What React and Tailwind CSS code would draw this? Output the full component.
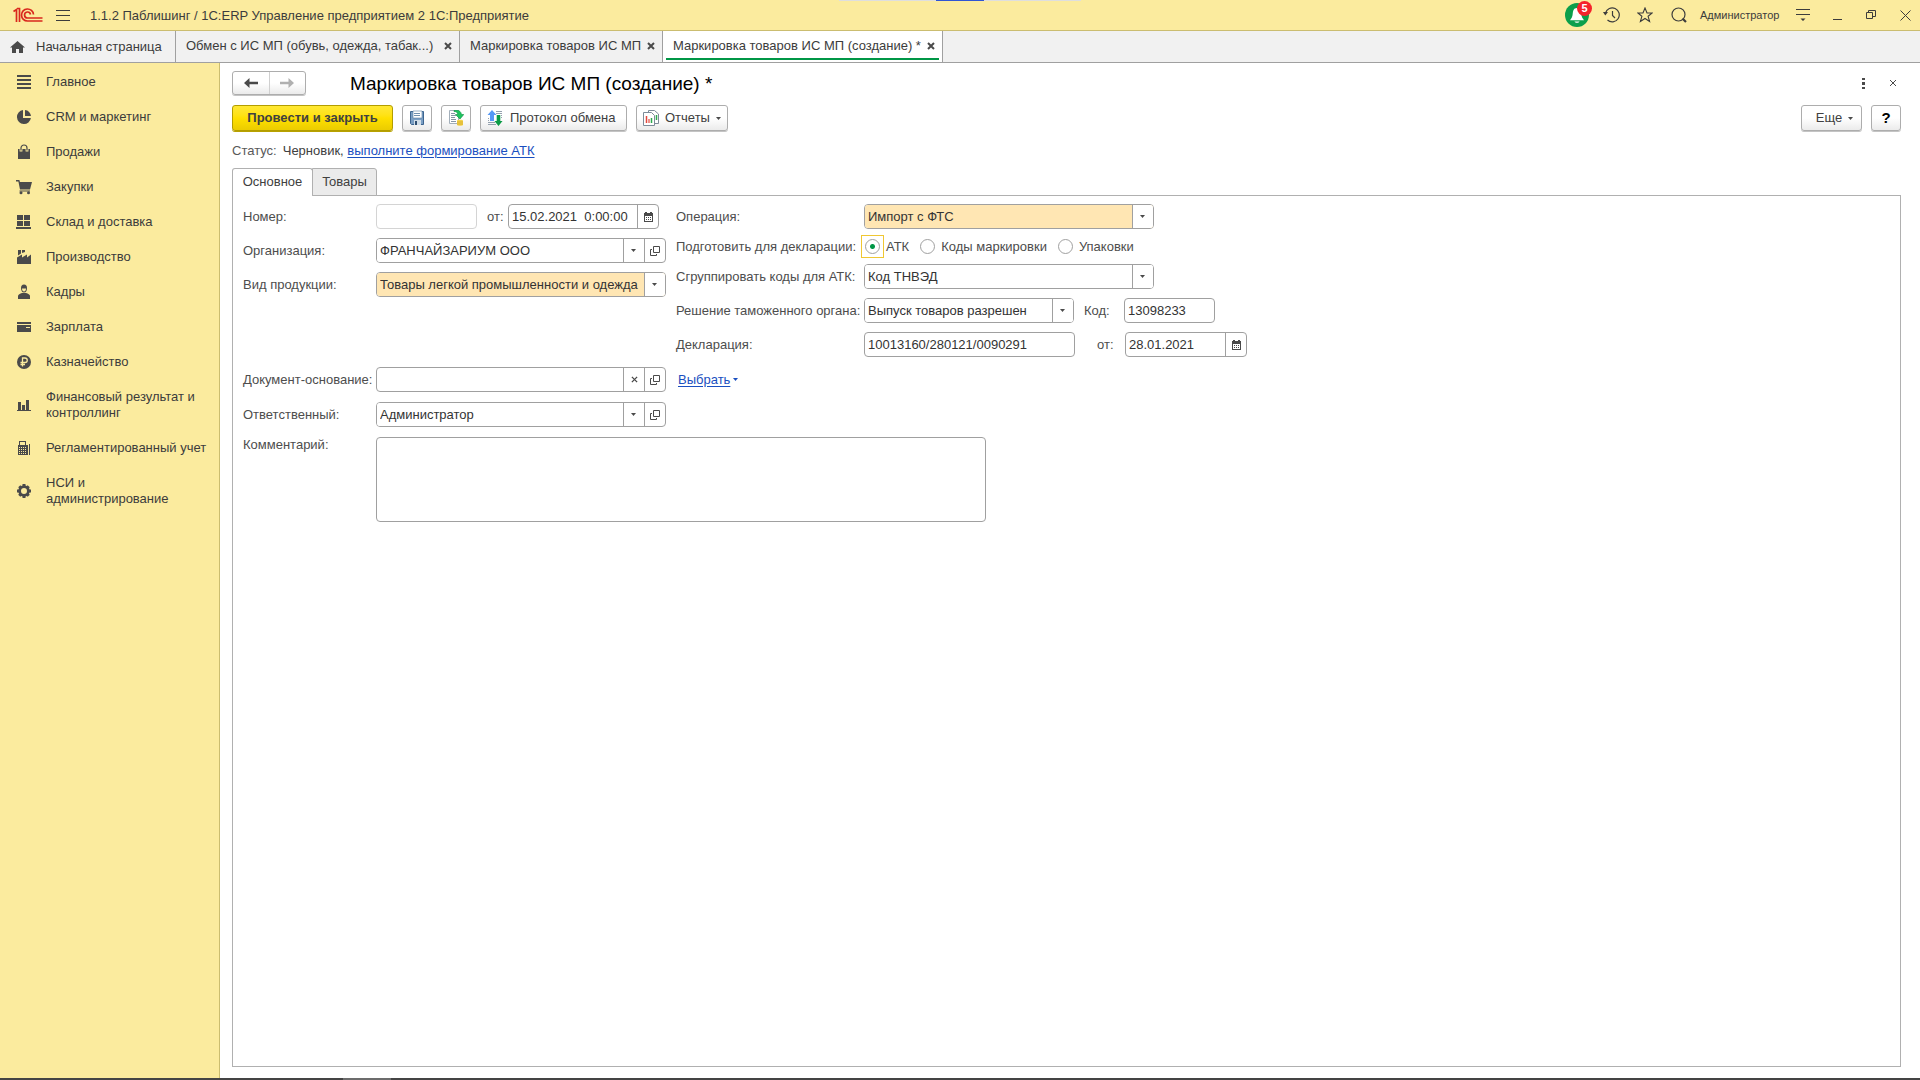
import React, { useState } from 'react';

const INK = '#4a4a4a';

const menuItems = [
  { label: 'Главное', icon: 'list' },
  { label: 'CRM и маркетинг', icon: 'pie' },
  { label: 'Продажи', icon: 'bag' },
  { label: 'Закупки', icon: 'cart' },
  { label: 'Склад и доставка', icon: 'boxes' },
  { label: 'Производство', icon: 'factory' },
  { label: 'Кадры', icon: 'person' },
  { label: 'Зарплата', icon: 'card' },
  { label: 'Казначейство', icon: 'ruble' },
  { label: 'Финансовый результат и контроллинг', icon: 'bars' },
  { label: 'Регламентированный учет', icon: 'calc' },
  { label: 'НСИ и администрирование', icon: 'gear' },
];

const menuIcons = {
  list: <path d="M1 1h14v2H1zM1 5h14v2H1zM1 9h14v2H1zM1 13h14v2H1z" />,
  pie: (
    <>
      <path d="M7 1.1A7 7 0 1 0 14.9 9H7z" />
      <path d="M9 1a6.5 6.5 0 0 1 6 6H9z" />
    </>
  ),
  bag: (
    <>
      <path d="M2 5h12v10H2z" />
      <path d="M5 7.500V4a3 3 0 0 1 6 0v3.500" fill="none" stroke="#fbeb9e" strokeWidth="2.800" />
      <path d="M5 6.500V4a3 3 0 0 1 6 0v2.500" fill="none" stroke={INK} strokeWidth="1.200" />
    </>
  ),
  cart: (
    <>
      <path d="M0 1h3.4l.5 2H16l-2 7.5H4L2.4 2.5H0z" />
      <path d="M3.5 11.5h10.500v1h-10.500z" />
      <circle cx="5" cy="13.700" r="1.500" />
      <circle cx="12.500" cy="13.700" r="1.500" />
    </>
  ),
  boxes: <path d="M1 1h6v5H1zM8 1h6v5H8zM1 7h6v5H1zM8 7h6v5H8zM0 13h15v2H0z" />,
  factory: (
    <>
      <path d="M1 15V8.500l5-3v3l5-3v3l4-3V15z" />
      <path d="M2 1h3v3.500L2 6.500zM6 1h3v2L6 4z" />
    </>
  ),
  person: (
    <>
      <path d="M5 4a3 3.500 0 0 1 6 0c0 2.500-1 4.500-3 4.500S5 6.500 5 4z" />
      <path d="M6 4.500h4c0 2-.8 3-2 3s-2-1-2-3z" fill="#fbeb9e" />
      <path d="M2 15v-3c0-1.500 2-2.500 4-3h4c2 .5 4 1.500 4 3v3z" />
    </>
  ),
  card: (
    <>
      <path d="M1 3h14v2H1zM1 6h14v7H1z" />
      <path d="M10 8h4v1h-4z" fill="#fbeb9e" />
    </>
  ),
  ruble: (
    <>
      <circle cx="8" cy="8" r="7" />
      <path d="M6.500 12.500V4H9a2.200 2.200 0 0 1 0 4.500H4.500M4.500 10.500H9" fill="none" stroke="#fbeb9e" strokeWidth="1.300" />
    </>
  ),
  bars: <path d="M2 5h3v8H2zM6 8h3v5H6zM10 3h3v10h-3zM1 13h14v1H1z" />,
  calc: (
    <>
      <path d="M2 5h1V1h7v4h2v10H2z" />
      <path d="M13 4h1v11h-1z" />
      <path d="M4 2h5v3H4zM3 7h1v1H3zM5 7h1v1H5zM7 7h1v1H7zM9 7h1v1H9zM3 9h1v1H3zM5 9h1v1H5zM7 9h1v1H7zM9 9h1v1H9zM3 11h1v1H3zM5 11h1v1H5zM7 11h1v1H7zM9 11h1v1H9zM3 13h1v1H3zM5 13h1v1H5zM7 13h1v1H7zM9 13h1v1H9z" fill="#fbeb9e" />
    </>
  ),
  gear: (
    <>
      <circle cx="8" cy="8" r="4.400" fill="none" stroke={INK} strokeWidth="2.800" />
      <path d="M6.500 1h3v2.500h-3zM6.500 12.500h3V15h-3zM1 6.500h2.500v3H1zM12.500 6.500H15v3h-2.500z" />
      <path d="M8 1.300v2.700M8 12v2.700M1.300 8H4M12 8h2.700" transform="rotate(45 8 8)" stroke={INK} strokeWidth="3" />
    </>
  ),
};

const MenuIcon = ({ name }) => (
  <svg className="w-4 h-4 shrink-0" viewBox="0 0 16 16" fill={INK}>
    {menuIcons[name]}
  </svg>
);

const Logo = () => (
  <svg className="w-[30px] h-4" viewBox="0 0 30 16" fill="none" stroke="#d9281e">
    <path d="M0.500 4.500L3.500 2.500V15M6.500 15V1.500H4" strokeWidth="1.700" />
    <path d="M20.500 7.500A6 6 0 1 0 14.500 14H29.500" strokeWidth="1.700" />
    <path d="M17.500 7.500A3 3 0 1 0 14.500 11H29.500" strokeWidth="1.700" />
  </svg>
);

const Caret = ({ className = 'text-[#4a4a4a]' }) => (
  <svg className={`w-[5px] h-[3px] ${className}`} viewBox="0 0 5 3" fill="currentColor">
    <path d="M0 0h5L2.500 3z" />
  </svg>
);

const Cross = ({ className = 'w-2 h-2', width = 2 }) => (
  <svg className={className} viewBox="0 0 8 8" stroke="#4a4a4a" strokeWidth={width}>
    <path d="M1 1l6 6M7 1l-6 6" />
  </svg>
);

const OpenIcon = () => (
  <svg className="w-[10px] h-[10px]" viewBox="0 0 10 10" fill="none" stroke="#4a4a4a">
    <path d="M3.500 0.500h6v6h-6zM2 3.500H0.500v6h6V8" />
  </svg>
);

const CalendarIcon = () => (
  <svg className="w-[9px] h-[10px]" viewBox="0 0 9 10" fill="#4a4a4a">
    <path d="M0 1h1V0h2v1h3V0h2v1h1v9H0z" />
    <path d="M1 4h7v5H1z" fill="#fff" />
    <path d="M2 5h1v1H2zM4 5h1v1H4zM6 5h1v1H6zM2 7h1v1H2zM4 7h1v1H4zM6 7h1v1H6z" />
  </svg>
);

const BellIcon = () => (
  <svg className="w-6 h-6" viewBox="0 0 24 24">
    <circle cx="12" cy="12" r="12" fill="#0b9f4b" />
    <path d="M12 5c-3.500 0-4 3-4.300 6-.2 2.500-1.200 4.500-2.700 6.200h14c-1.500-1.700-2.500-3.700-2.700-6.200C16 8 15.500 5 12 5z" fill="#fff" />
    <path d="M9.500 18.500h5c-.5 1.800-4.500 1.800-5 0z" fill="#fff" />
  </svg>
);

const HistoryIcon = () => (
  <svg className="w-[17px] h-4" viewBox="0 0 17 16" fill="none" stroke="#3c3c3c" strokeWidth="1.200">
    <path d="M2.500 6A7 7 0 1 1 4.500 13M9.500 4v4.500l2.500 2.500" />
    <path d="M0 5h5L2.300 8.500z" fill="#3c3c3c" stroke="none" />
  </svg>
);

const StarIcon = () => (
  <svg className="w-4 h-4" viewBox="0 0 16 16" fill="none" stroke="#3c3c3c" strokeWidth="1.100">
    <path d="M8 1l2 5h5.200l-4.100 3.300 1.500 5.200L8 11.500l-4.600 3 1.500-5.200L0.800 6H6z" />
  </svg>
);

const SearchIcon = () => (
  <svg className="w-4 h-4" viewBox="0 0 16 16" fill="none" stroke="#3c3c3c">
    <circle cx="7.500" cy="7.500" r="6.500" strokeWidth="1.200" />
    <path d="M11.500 11.500l3.500 3.500" strokeWidth="2.200" />
  </svg>
);

const SaveIcon = () => (
  <svg className="w-4 h-4" viewBox="0 0 16 16">
    <path d="M1.500 1.500h13v13h-12l-1-1z" fill="#7b9fc4" stroke="#3d6590" />
    <path d="M4 1h9v7H4z" fill="#fff" stroke="#5c7fa5" strokeWidth="0.600" />
    <path d="M5 3.500h6M5 5.500h6" stroke="#6f8fae" />
    <path d="M5 10h7v5H5z" fill="#d3dfe9" />
    <path d="M6 11h2v4H6z" fill="#2f4f73" />
  </svg>
);

const PostIcon = () => (
  <svg className="w-4 h-4" viewBox="0 0 16 16">
    <path d="M1.500 0.500h9v13h-9z" fill="#fff" stroke="#a3afba" />
    <path d="M3 3.500h4M3 5.500h5M3 7.500h4M3 9.500h5M3 11.500h5" stroke="#8796a6" />
    <path d="M6 0.500c4-1 7 .5 7.500 4h2.300L12 9 7.500 4.500h2.300C9.500 2.500 8.500 1.500 6 1.500z" fill="#1ec45f" stroke="#0a8f42" strokeWidth="0.600" />
    <path d="M9 10.500c0-1 6-1 6 0V15c0 1-6 1-6 0z" fill="#f4d24a" />
    <path d="M9 12h6M9 14h6" stroke="#c79c1c" strokeWidth="0.600" />
  </svg>
);

const ProtocolIcon = () => (
  <svg className="w-4 h-4" viewBox="0 0 16 16">
    <path d="M9 1.500h6M9 3.500h6M14 5.500h1M14 7.500h1M1 8.500h1M1 10.500h1M1 12.500h7M1 14.500h8" stroke="#93a0ad" />
    <path d="M5 0l4.500 5H7v6H3V5H0.500z" fill="#5598f5" />
    <path d="M11.500 16L7.500 11h2.200V5h3.600v6h2.200z" fill="#0b9a46" />
  </svg>
);

const ReportIcon = () => (
  <svg className="w-4 h-4" viewBox="0 0 16 16" fill="#fff" stroke="#7d8b99">
    <path d="M5.500 0.500h6l4 3.500v9.500h-10z" />
    <path d="M13.500 5v5" stroke="#2ea84f" strokeWidth="1.500" />
    <path d="M0.500 2.500h8l3 3v10h-11z" />
    <path d="M3.500 6v7" stroke="#e2473c" strokeWidth="1.500" />
    <path d="M6 9v4" stroke="#e2473c" strokeWidth="1.200" />
    <path d="M8.500 8v5" stroke="#2ea84f" strokeWidth="1.500" />
  </svg>
);

const buttonClass =
  'h-[26px] flex items-center border border-[#adadad] rounded-[3px] bg-gradient-to-b from-white from-50% to-[#ebebeb] shadow-[0_1px_0_#c4c4c4]';

const fieldClass = 'h-[25px] flex items-stretch overflow-hidden rounded-[4px] border border-[#a0a0a0] bg-white';

const FieldButton = ({ label, children }) => (
  <button type="button" aria-label={label} className="w-[21px] shrink-0 flex items-center justify-center border-l border-[#a0a0a0]">
    {children}
  </button>
);

const SelectField = ({ id, value, className, filled, children }) => (
  <div className={`${fieldClass} ${className}`}>
    <div className="relative flex-1 flex">
      <select
        id={id}
        defaultValue={value}
        className={`flex-1 min-w-0 appearance-none pl-[3px] text-[#333] outline-none ${filled ? 'bg-[#ffe6b3]' : 'bg-white'}`}
      >
        <option>{value}</option>
      </select>
      <span className="absolute inset-y-0 right-0 w-[21px] flex items-center justify-center pr-px border-l border-[#a0a0a0] bg-white pointer-events-none">
        <Caret />
      </span>
    </div>
    {children}
  </div>
);

const TextField = ({ id, value, className, children }) => (
  <div className={`${fieldClass} ${className}`}>
    <input id={id} type="text" defaultValue={value} className="flex-1 min-w-0 px-[3px] text-[#333] whitespace-pre outline-none" />
    {children}
  </div>
);

const LeftLabel = ({ htmlFor, children }) => (
  <label htmlFor={htmlFor} className="w-[133px] shrink-0 whitespace-nowrap">{children}</label>
);

const RightLabel = ({ htmlFor, children }) => (
  <label htmlFor={htmlFor} className="w-[188px] shrink-0 whitespace-nowrap">{children}</label>
);

const Header = () => (
  <header className="relative h-[31px] shrink-0 flex items-center pl-[13px] pr-2 bg-[#fbeb9e] border-b border-[#cbbd70] text-[#3c3c3c]">
    <div className="absolute top-0 left-1/2 -translate-x-1/2 w-[242px] h-px flex justify-center bg-[#dedede]">
      <span className="w-12 bg-[#2f55d4]" />
    </div>
    <Logo />
    <button type="button" aria-label="Меню" className="ml-[13px] w-[14px] flex flex-col gap-1">
      <span className="h-px bg-[#3c3c3c]" />
      <span className="h-px bg-[#3c3c3c]" />
      <span className="h-px bg-[#3c3c3c]" />
    </button>
    <div className="ml-5 pt-px flex-1 whitespace-nowrap">1.1.2 Паблишинг / 1С:ERP Управление предприятием 2 1С:Предприятие</div>
    <button type="button" aria-label="Уведомления" className="relative mr-[14px]">
      <BellIcon />
      <span className="absolute -top-[2px] left-3 w-[15px] h-[15px] rounded-full bg-[#f5232b] text-white text-[11px] leading-[15px] font-bold text-center">5</span>
    </button>
    <button type="button" aria-label="История" className="mr-[17px]"><HistoryIcon /></button>
    <button type="button" aria-label="Избранное" className="mr-[18px]"><StarIcon /></button>
    <button type="button" aria-label="Поиск" className="mr-[13px]"><SearchIcon /></button>
    <a href="#user" className="w-[83px] text-[11px]">Администратор</a>
    <button type="button" aria-label="Настройки" className="ml-[13px] mr-[23px]">
      <svg className="w-[14px] h-3" viewBox="0 0 14 12" fill="#3c3c3c">
        <path d="M0 0h14v1H0zM0 5h14v1H0zM4.500 9.500h5L7 12z" />
      </svg>
    </button>
    <button type="button" aria-label="Свернуть" className="mr-[23px]">
      <svg className="w-[10px] h-[10px]" viewBox="0 0 10 10"><path d="M0 9h9v1H0z" fill="#3c3c3c" /></svg>
    </button>
    <button type="button" aria-label="Восстановить" className="mr-[23px]">
      <svg className="w-[10px] h-[10px]" viewBox="0 0 10 10" fill="none" stroke="#3c3c3c">
        <path d="M0.500 2.500h6v6h-6zM2.500 2.500v-2h7v6h-3" />
      </svg>
    </button>
    <button type="button" aria-label="Закрыть" className="p-px">
      <svg className="w-[11px] h-[11px]" viewBox="0 0 11 11" stroke="#3c3c3c"><path d="M0.500 0.500l10 10M10.500 0.500l-10 10" /></svg>
    </button>
  </header>
);

const windowTabs = [
  { label: 'Обмен с ИС МП (обувь, одежда, табак...)', width: 'w-[284px]' },
  { label: 'Маркировка товаров ИС МП', width: 'w-[203px]' },
  { label: 'Маркировка товаров ИС МП (создание) *', width: 'w-[280px]', active: true },
];

const WindowTabs = () => (
  <nav className="h-8 shrink-0 flex bg-[#f1f1f1] border-b border-[#a0a0a0] text-[#3c3c3c]">
    <a href="#home" className="w-[176px] flex items-center pl-[10px] gap-[11px] border-r border-[#a0a0a0] whitespace-nowrap">
      <svg className="w-[15px] h-3" viewBox="0 0 15 12" fill={INK}>
        <path d="M7.500 0L15 6.500h-2V12H9V8H6v4H2V6.500H0z" />
      </svg>
      Начальная страница
    </a>
    {windowTabs.map((tab) => (
      <div
        key={tab.label}
        className={`${tab.width} flex px-[3px] border-r border-[#a0a0a0] whitespace-nowrap ${tab.active ? 'bg-white' : ''}`}
      >
        <div className={`flex-1 flex items-center justify-between pl-[7px] pr-1 pt-[3px] mb-[2px] border-b-2 ${tab.active ? 'border-[#009646]' : 'border-transparent'}`}>
          <a href="#tab">{tab.label}</a>
          <button type="button" aria-label="Закрыть вкладку"><Cross /></button>
        </div>
      </div>
    ))}
  </nav>
);

const Sidebar = () => (
  <aside className="w-[220px] shrink-0 bg-[#fbeb9e] border-r border-[#cbbd70] text-[#3c3c3c]">
    <ul className="flex flex-col gap-[19px] pt-[11px] pl-4 pr-[10px]">
      {menuItems.map((item) => (
        <li key={item.label}>
          <a href="#section" className="flex items-center gap-[14px]">
            <MenuIcon name={item.icon} />
            <span>{item.label}</span>
          </a>
        </li>
      ))}
    </ul>
  </aside>
);

const targets = ['АТК', 'Коды маркировки', 'Упаковки'];

const DocumentForm = () => {
  const [target, setTarget] = useState('АТК');

  return (
    <form className="flex-1 flex flex-col gap-[10px] px-[10px] py-2 border border-[#b0b0b0] text-[#4d4d4d]">
      <div className="flex gap-[10px]">
        <div className="w-[423px] shrink-0 flex flex-col gap-[9px]">
          <div className="flex items-center">
            <LeftLabel htmlFor="number">Номер:</LeftLabel>
            <input id="number" type="text" className="w-[101px] h-[25px] rounded-[4px] border border-[#d4d4d4] px-[3px]" />
            <label htmlFor="date" className="w-[31px] pl-[10px]">от:</label>
            <TextField id="date" value="15.02.2021  0:00:00" className="w-[151px]">
              <FieldButton label="Выбрать дату"><CalendarIcon /></FieldButton>
            </TextField>
          </div>
          <div className="flex items-center">
            <LeftLabel htmlFor="org">Организация:</LeftLabel>
            <SelectField id="org" value="ФРАНЧАЙЗАРИУМ ООО" className="w-[290px]">
              <FieldButton label="Открыть"><OpenIcon /></FieldButton>
            </SelectField>
          </div>
          <div className="flex items-center">
            <LeftLabel htmlFor="kind">Вид продукции:</LeftLabel>
            <SelectField id="kind" value="Товары легкой промышленности и одежда" className="w-[290px]" filled />
          </div>
        </div>

        <div className="flex flex-col gap-[9px]">
          <div className="flex items-center">
            <RightLabel htmlFor="operation">Операция:</RightLabel>
            <SelectField id="operation" value="Импорт с ФТС" className="w-[290px]" filled />
          </div>
          <div role="radiogroup" aria-labelledby="target-label" className="h-[17px] flex items-center">
            <span id="target-label" className="w-[185px] shrink-0 whitespace-nowrap">Подготовить для декларации:</span>
            {targets.map((name) => (
              <label key={name} className="flex items-center gap-[2px] mr-[7px] whitespace-nowrap">
                <span className={`w-[23px] h-[23px] flex items-center justify-center border ${target === name ? 'border-[#f0c733]' : 'border-transparent'}`}>
                  <input
                    type="radio"
                    name="target"
                    checked={target === name}
                    onChange={() => setTarget(name)}
                    className="appearance-none w-[15px] h-[15px] rounded-full border border-[#a0a0a0] bg-white checked:bg-[radial-gradient(circle,#009646_2px,white_3px)]"
                  />
                </span>
                {name}
              </label>
            ))}
          </div>
          <div className="flex items-center">
            <RightLabel htmlFor="group">Сгруппировать коды для АТК:</RightLabel>
            <SelectField id="group" value="Код ТНВЭД" className="w-[290px]" />
          </div>
          <div className="flex items-center">
            <RightLabel htmlFor="decision">Решение таможенного органа:</RightLabel>
            <SelectField id="decision" value="Выпуск товаров разрешен" className="w-[210px]" />
            <label htmlFor="code" className="w-[50px] pl-[10px]">Код:</label>
            <TextField id="code" value="13098233" className="w-[91px]" />
          </div>
          <div className="flex items-center">
            <RightLabel htmlFor="declaration">Декларация:</RightLabel>
            <TextField id="declaration" value="10013160/280121/0090291" className="w-[211px]" />
            <label htmlFor="declDate" className="w-[50px] pl-[22px]">от:</label>
            <TextField id="declDate" value="28.01.2021" className="w-[122px]">
              <FieldButton label="Выбрать дату"><CalendarIcon /></FieldButton>
            </TextField>
          </div>
        </div>
      </div>

      <div className="flex items-center">
        <LeftLabel htmlFor="base">Документ-основание:</LeftLabel>
        <TextField id="base" className="w-[290px]">
          <FieldButton label="Очистить"><Cross className="w-[7px] h-[7px]" width={1.5} /></FieldButton>
          <FieldButton label="Открыть"><OpenIcon /></FieldButton>
        </TextField>
        <a href="#choose" className="ml-3 flex items-center gap-[3px] text-[#1a4fc0]">
          <span className="underline underline-offset-2">Выбрать</span>
          <Caret className="text-[#1a4fc0]" />
        </a>
      </div>
      <div className="flex items-center">
        <LeftLabel htmlFor="responsible">Ответственный:</LeftLabel>
        <SelectField id="responsible" value="Администратор" className="w-[290px]">
          <FieldButton label="Открыть"><OpenIcon /></FieldButton>
        </SelectField>
      </div>
      <div className="flex items-start">
        <LeftLabel htmlFor="comment">Комментарий:</LeftLabel>
        <textarea id="comment" className="w-[610px] h-[85px] resize-none rounded-[4px] border border-[#a0a0a0] bg-white px-[3px] outline-none" />
      </div>
    </form>
  );
};

const App = () => {
  return (
    <div className="min-h-screen flex flex-col bg-white text-[13px] leading-4 font-['Liberation_Sans',Arial,sans-serif]">
      <Header />
      <WindowTabs />
      <div className="flex-1 flex">
        <Sidebar />
        <main className="flex-1 min-w-0 flex flex-col pl-3 pr-[19px] pt-2 pb-[11px] text-[#404040]">
          <div className="flex items-center">
            <div className="h-6 w-[74px] flex border border-[#adadad] rounded-[3px] bg-gradient-to-b from-white from-50% to-[#ebebeb] shadow-[0_1px_0_#c4c4c4]">
              <button type="button" aria-label="Назад" className="flex-1 flex items-center justify-center">
                <svg className="w-[14px] h-[10px]" viewBox="0 0 14 10" fill="#4a4a4a"><path d="M0 5l5.500-5v3.700H14v2.600H5.500V10z" /></svg>
              </button>
              <button type="button" aria-label="Вперед" className="flex-1 flex items-center justify-center border-l border-[#d0d0d0]">
                <svg className="w-[14px] h-[10px]" viewBox="0 0 14 10" fill="#b0b0b0"><path d="M14 5L8.500 0v3.700H0v2.600h8.500V10z" /></svg>
              </button>
            </div>
            <h1 className="flex-1 ml-11 pt-px text-[19px] leading-[23px] text-black">Маркировка товаров ИС МП (создание) *</h1>
            <button type="button" aria-label="Действия" className="w-4 flex justify-center">
              <svg className="w-[3px] h-[11px]" viewBox="0 0 3 11" fill="#4a4a4a"><path d="M0 0h3v2H0zM0 4h3v3H0zM0 9h3v2H0z" /></svg>
            </button>
            <button type="button" aria-label="Закрыть форму" className="ml-[18px] mr-1">
              <Cross className="w-2 h-2" width={1} />
            </button>
          </div>

          <div className="flex gap-[9px] mt-[10px]">
            <button type="button" className="h-[26px] w-[161px] border border-[#b39d00] rounded-[3px] bg-gradient-to-b from-[#ffe833] via-[#ffe000] to-[#ebcc00] shadow-[0_1px_0_#b8a200] font-bold">Провести и закрыть</button>
            <button type="button" aria-label="Записать" className={`${buttonClass} justify-center w-[30px]`}><SaveIcon /></button>
            <button type="button" aria-label="Провести" className={`${buttonClass} justify-center w-[30px]`}><PostIcon /></button>
            <button type="button" className={`${buttonClass} w-[147px] pl-[6px] gap-[7px]`}><ProtocolIcon />Протокол обмена</button>
            <button type="button" className={`${buttonClass} w-[92px] pl-[6px] gap-[6px]`}><ReportIcon />Отчеты<Caret /></button>
            <button type="button" className={`${buttonClass} justify-center w-[61px] gap-[6px] ml-auto pl-[6px]`}>Еще<Caret /></button>
            <button type="button" aria-label="Справка" className={`${buttonClass} justify-center w-[30px] text-black text-[15px] font-bold`}>?</button>
          </div>

          <p className="mt-3 mb-[9px]">
            <span className="mr-[6px] text-[#595959]">Статус:</span>Черновик, <a href="#atk" className="text-[#1a4fc0] underline underline-offset-2">выполните формирование АТК</a>
          </p>

          <div role="tablist" className="relative flex -mb-px">
            <button type="button" role="tab" aria-selected="true" className="w-[81px] h-7 pb-[2px] border border-b-0 border-[#b0b0b0] rounded-t-[3px] bg-white">Основное</button>
            <button type="button" role="tab" aria-selected="false" className="w-[65px] h-7 pb-px -ml-px border border-[#b0b0b0] rounded-tr-[3px] bg-[#ebebeb]">Товары</button>
          </div>
          <DocumentForm />
        </main>
      </div>
      <footer className="h-[2px] shrink-0 flex bg-[#444] pl-[343px]">
        <span className="w-12 bg-[#6c6c6c]" />
      </footer>
    </div>
  );
};

export default App;
